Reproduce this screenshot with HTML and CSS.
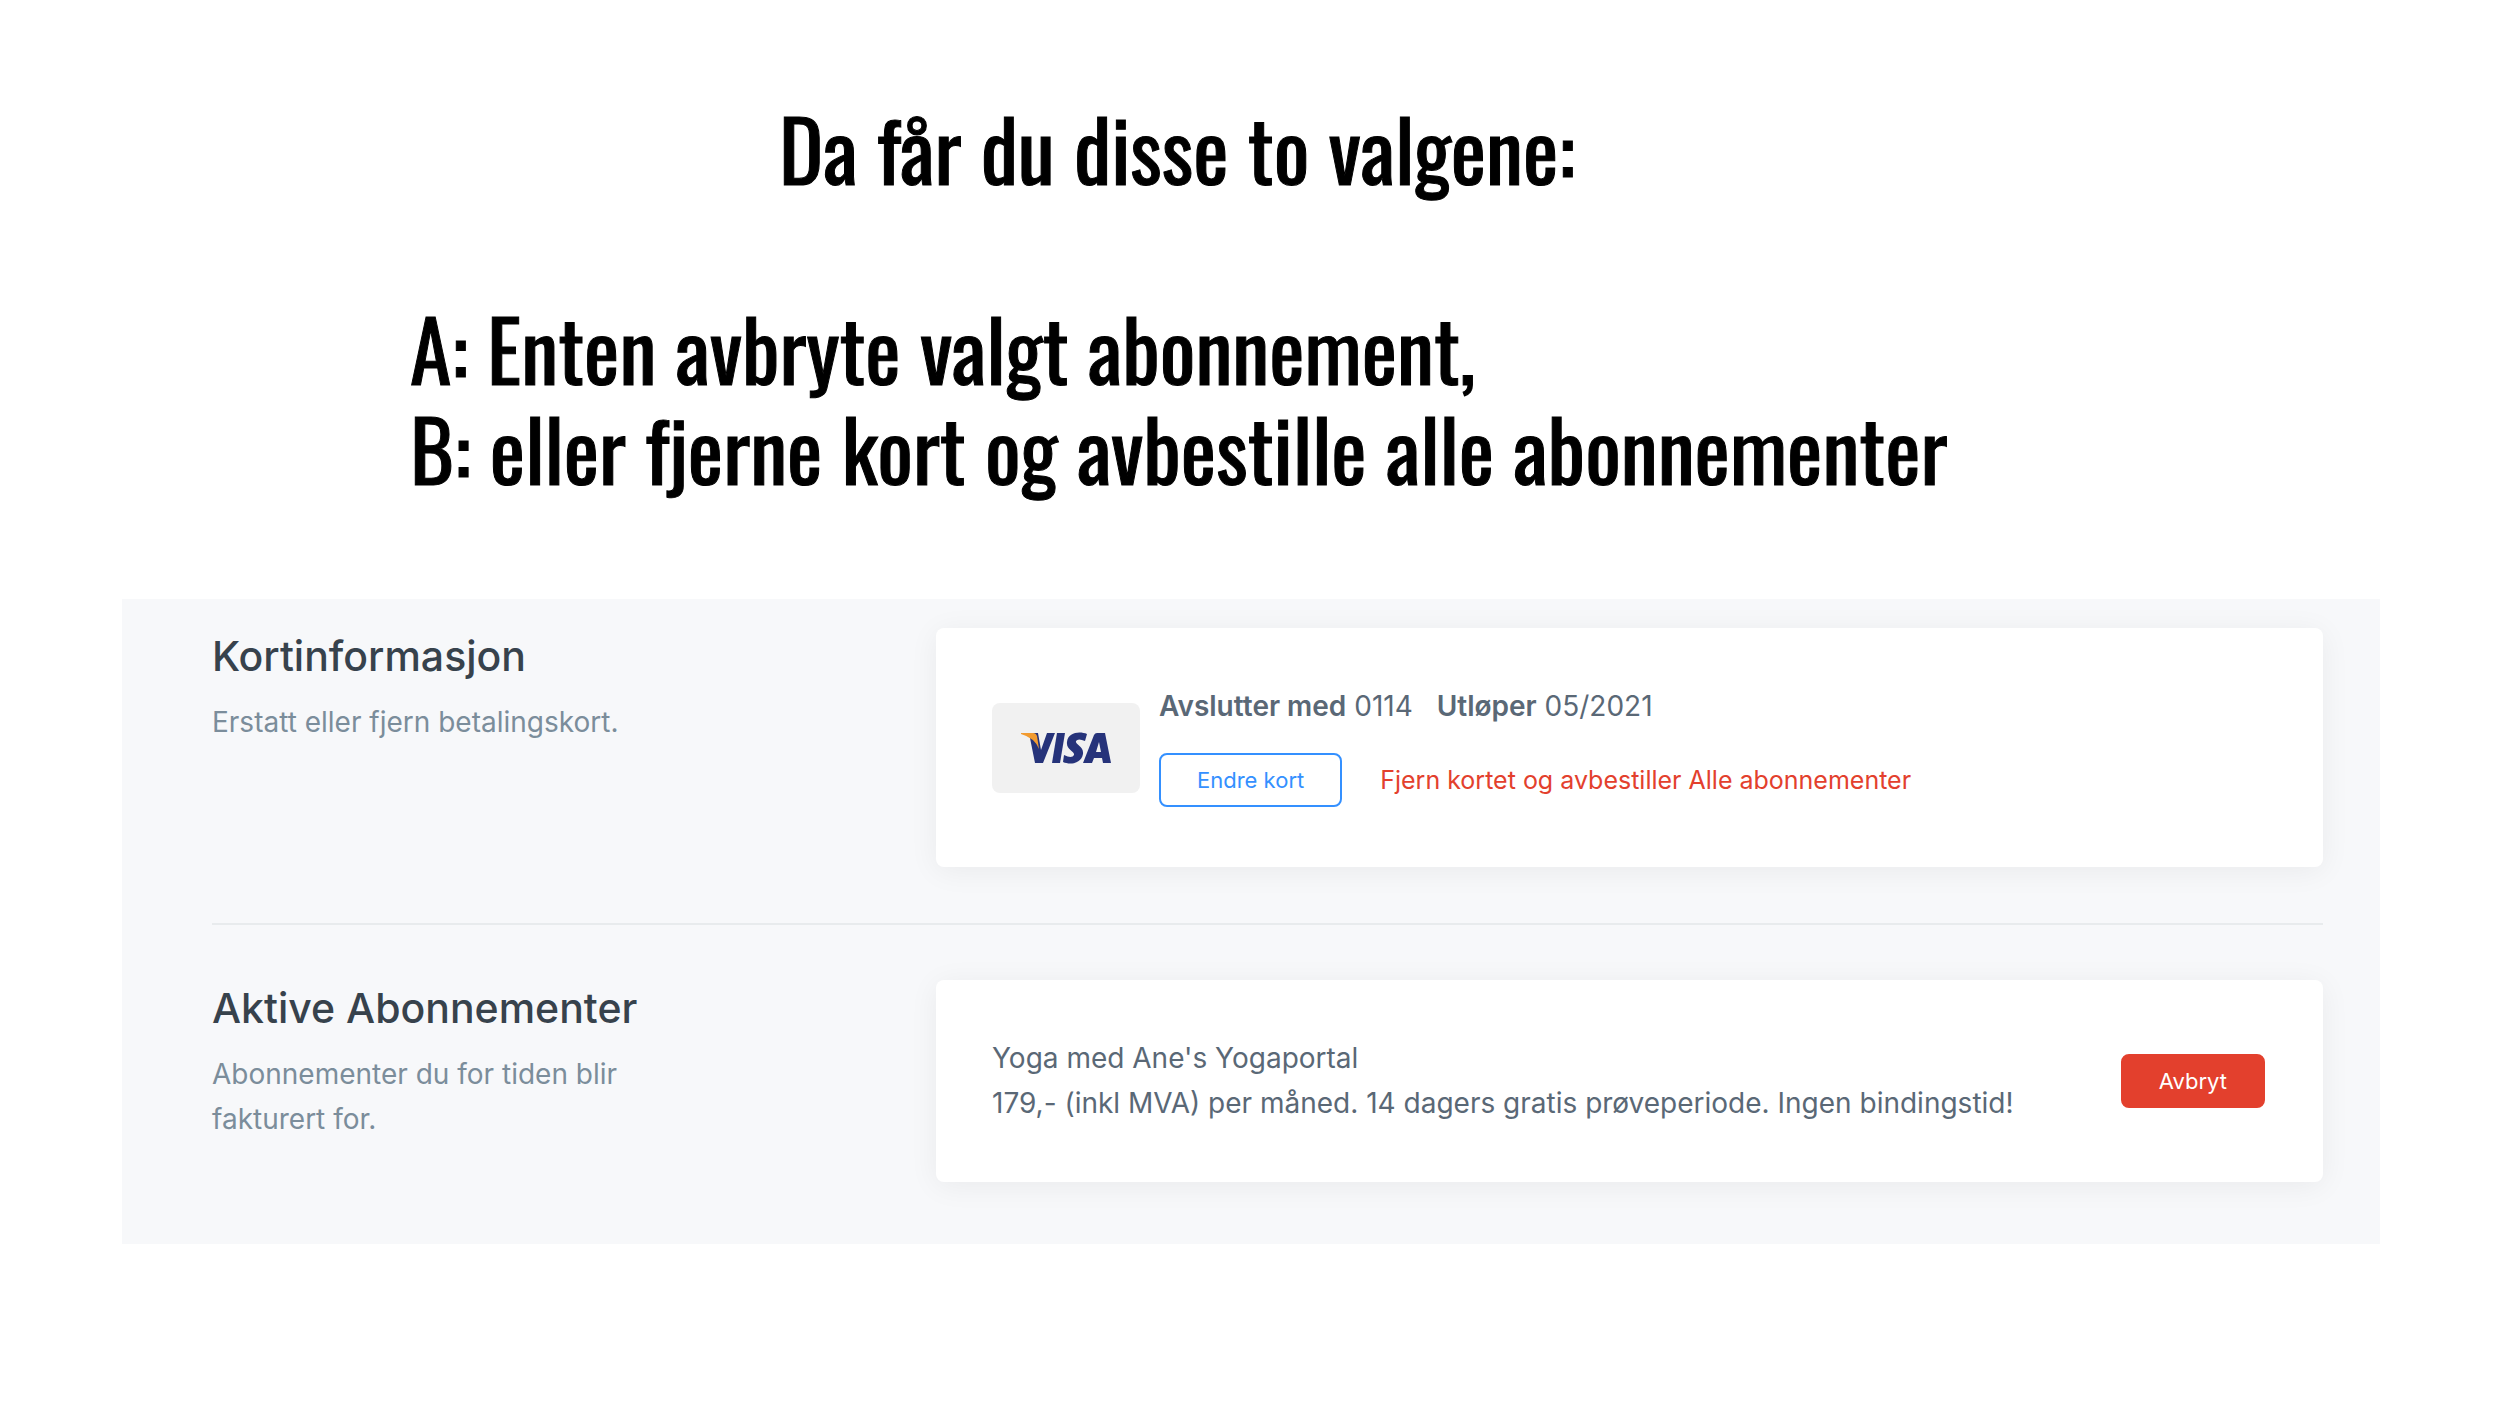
FILE: index.html
```
<!DOCTYPE html>
<html lang="no">
<head>
    <meta charset="UTF-8">
    <title>Avbryt abonnement</title>
    <link rel="stylesheet" href="styles.css">
</head>
<body>
    <header class="intro">
        <h1>Da får du disse to valgene:</h1>
        <p>A: Enten avbryte valgt abonnement,<br>B: eller fjerne kort og avbestille alle abonnementer</p>
    </header>

    <main class="panel">
        <section class="row">
            <div class="row-info">
                <h2>Kortinformasjon</h2>
                <p>Erstatt eller fjern betalingskort.</p>
            </div>
            <div class="card">
                <div class="card-brand">
                    <svg class="visa" viewBox="0 0 90 32" role="img" aria-label="Visa">
                        <path fill="#26337a" d="M8 1 L17 1 L20 18 L26 1 L34 1 L22 31 L14 31 Z"/>
                        <path fill="#f29b30" d="M0 1 L12 1 Q15 1 16 4 L18 17 Q14 6 0 2 Z"/>
                        <path fill="#26337a" d="M36 1 L44 1 L39 31 L31 31 Z"/>
                        <path fill="#26337a" d="M66 2 L64 9 Q57 6 55 9 C54 13 63 14 62 22 C60 32 49 33 42 30 L43 23 Q51 27 53 23 C54 19 45 18 46 10 C47 0 59 -1 66 2 Z"/>
                        <path fill="#26337a" fill-rule="evenodd" d="M76 1 L84 1 L90 31 L82 31 L81 26 L73 26 L71 31 L62 31 L73 3 Q74 1 76 1 Z M78 10 L75 20 L80 20 Z"/>
                    </svg>
                </div>
                <div class="card-details">
                    <p><strong>Avslutter med</strong> 0114 <span class="expiry"><strong>Utløper</strong> 05/2021</span></p>
                    <div class="actions">
                        <button type="button" class="btn btn-outline">Endre kort</button>
                        <a href="#" class="remove-link">Fjern kortet og avbestiller Alle abonnementer</a>
                    </div>
                </div>
            </div>
        </section>

        <hr>

        <section class="row">
            <div class="row-info">
                <h2>Aktive Abonnementer</h2>
                <p>Abonnementer du for tiden blir fakturert for.</p>
            </div>
            <div class="card">
                <p class="subscription">Yoga med Ane's Yogaportal<br>179,- (inkl MVA) per måned. 14 dagers gratis prøveperiode. Ingen bindingstid!</p>
                <button type="button" class="btn btn-danger">Avbryt</button>
            </div>
        </section>
    </main>
</body>
</html>
```

FILE: styles.css
```
* {
    box-sizing: border-box;
}

body {
    font-family: Inter, "Liberation Sans", sans-serif;
    font-size: 28px;
    line-height: 45px;
    color: #5a6876;
    background-color: #fff;
    margin: 0;
}

h1, h2, p {
    margin: 0;
}

.intro {
    font-family: Oswald, "Liberation Sans Narrow", "Arial Narrow", sans-serif;
    font-size: 84px;
    line-height: 100px;
    color: #000;
    -webkit-text-stroke: 1px #000;
    max-width: 1944px;
    padding: 97px 0 0 410px;
}

.intro h1 {
    font-size: 84px;
    font-weight: 400;
    text-align: center;
    margin-bottom: 100px;
}

.intro p {
    white-space: nowrap;
}

.panel {
    background-color: #f7f8fa;
    margin: 102px 120px 0 122px;
    padding: 29px 57px 62px 90px;
}

.row {
    display: grid;
    grid-template-columns: 480px minmax(0, 1387px);
    justify-content: space-between;
}

.row-info h2 {
    font-size: 41px;
    font-weight: 500;
    line-height: 56px;
    color: #37424c;
    margin-bottom: 16px;
}

.row-info p {
    color: #7b8d9b;
    max-width: 440px;
}

.card {
    display: flex;
    align-items: center;
    background-color: #fff;
    border-radius: 8px;
    box-shadow: 0 4px 30px rgba(0, 0, 0, 0.06);
    padding: 56px 58px 56px 56px;
}

.card-brand {
    display: flex;
    align-items: center;
    justify-content: center;
    flex: none;
    background-color: #f1f1f1;
    border-radius: 8px;
    width: 148px;
    height: 90px;
    margin-right: 19px;
}

.visa {
    width: 90px;
    height: 32px;
}

.card-details strong {
    font-weight: 600;
}

.expiry {
    margin-left: 16px;
}

.actions {
    display: flex;
    align-items: center;
    gap: 38px;
    margin: 24px 0 4px;
}

.btn {
    font-family: inherit;
    font-size: 22px;
    line-height: 26px;
    border: 2px solid;
    border-radius: 8px;
    padding: 12px 36px;
    cursor: pointer;
}

.btn-outline {
    color: #3490ff;
    background-color: #fff;
    border-color: #3490ff;
}

.btn-danger {
    color: #fff;
    background-color: #e3402d;
    border-color: #e3402d;
    margin-left: auto;
}

.remove-link {
    font-size: 25px;
    color: #e3402d;
    text-decoration: none;
}

hr {
    border: none;
    border-top: 2px solid #e8ebed;
    margin: 56px 0 55px;
}
```
